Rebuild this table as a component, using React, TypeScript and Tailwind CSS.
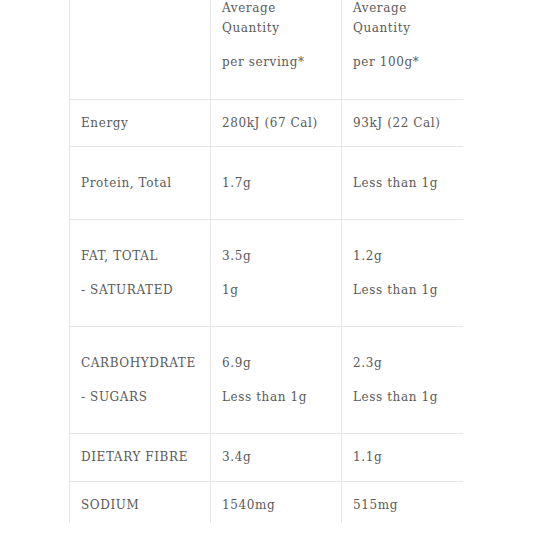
import React from 'react';

type Row = {
  label: string[];
  serving: string[];
  per100: string[];
  h: string;
};

const rows: Row[] = [
  { label: ['Energy'], serving: ['280kJ (67 Cal)'], per100: ['93kJ (22 Cal)'], h: 'h-[47px]' },
  { label: ['Protein, Total'], serving: ['1.7g'], per100: ['Less than 1g'], h: 'h-[73px]' },
  { label: ['FAT, TOTAL', '- SATURATED'], serving: ['3.5g', '1g'], per100: ['1.2g', 'Less than 1g'], h: 'h-[107px]' },
  { label: ['CARBOHYDRATE', '- SUGARS'], serving: ['6.9g', 'Less than 1g'], per100: ['2.3g', 'Less than 1g'], h: 'h-[107px]' },
  { label: ['DIETARY FIBRE'], serving: ['3.4g'], per100: ['1.1g'], h: 'h-[48px]' },
];

function Lines({ items }: { items: string[] }) {
  return (
    <div className="flex flex-col gap-[14px]">
      {items.map((t, i) => (
        <p key={i} className="leading-5 whitespace-nowrap">{t}</p>
      ))}
    </div>
  );
}

export default function App() {
  return (
    <div
      className="min-h-screen bg-white pl-[69px] text-[12px] tracking-[0.05em] text-[#5a5a5a]"
      style={{ fontFamily: '"DejaVu Serif", serif' }}
    >
      <table className="border-collapse w-[393px] table-fixed">
        <colgroup>
          <col className="w-[141px]" />
          <col className="w-[131px]" />
          <col className="w-[121px]" />
        </colgroup>
        <tbody>
          <tr className="h-[99px] border-b border-[#e6e6e6]">
            <td className="border-l border-[#e6e6e6]"></td>
            <td className="border-l border-[#e6e6e6] align-top pl-[11px]">
              <div className="-mt-[2px]">
                <p className="leading-5">Average</p>
                <p className="leading-5">Quantity</p>
                <p className="leading-5 mt-[14px]">per serving*</p>
              </div>
            </td>
            <td className="border-l border-[#e6e6e6] align-top pl-[11px]">
              <div className="-mt-[2px]">
                <p className="leading-5">Average</p>
                <p className="leading-5">Quantity</p>
                <p className="leading-5 mt-[14px]">per 100g*</p>
              </div>
            </td>
          </tr>
          {rows.map((r, i) => (
            <tr key={i} className={`${r.h} border-b border-[#e6e6e6]`}>
              <td className="border-l border-[#e6e6e6] pl-[11px] align-middle"><Lines items={r.label} /></td>
              <td className="border-l border-[#e6e6e6] pl-[11px] align-middle"><Lines items={r.serving} /></td>
              <td className="border-l border-[#e6e6e6] pl-[11px] align-middle"><Lines items={r.per100} /></td>
            </tr>
          ))}
          <tr className="h-[42px]">
            <td className="border-l border-[#e6e6e6] pl-[11px] pt-[6px] align-middle"><Lines items={['SODIUM']} /></td>
            <td className="border-l border-[#e6e6e6] pl-[11px] pt-[6px] align-middle"><Lines items={['1540mg']} /></td>
            <td className="border-l border-[#e6e6e6] pl-[11px] pt-[6px] align-middle"><Lines items={['515mg']} /></td>
          </tr>
        </tbody>
      </table>
    </div>
  );
}
